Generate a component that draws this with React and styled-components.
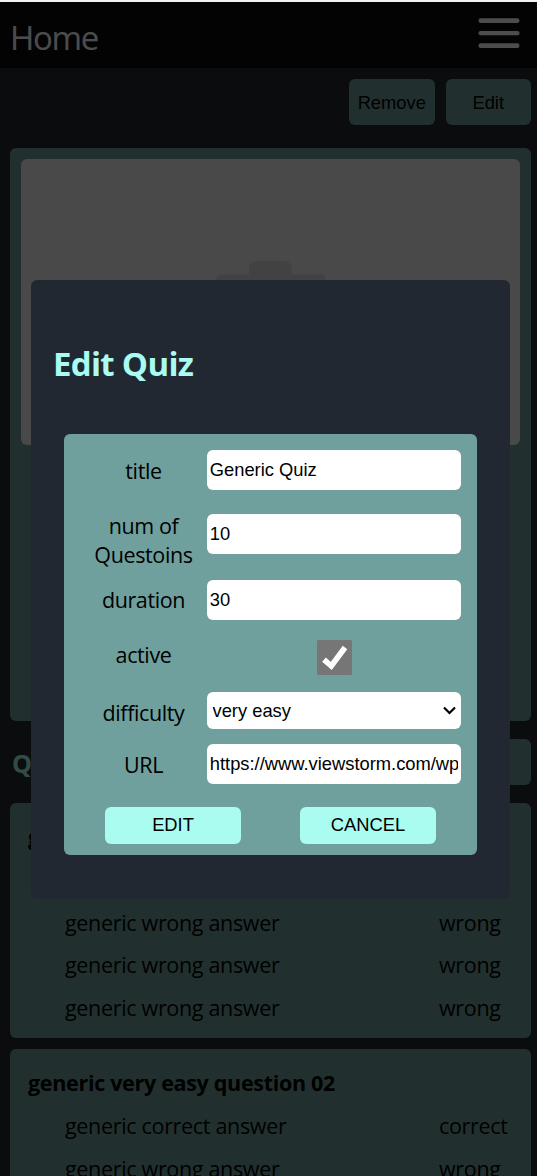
import React from "react";
import styled, { createGlobalStyle } from "styled-components";

const Global = createGlobalStyle`
  * { box-sizing: border-box; }
  html, body { margin: 0; height: 1176px; overflow: hidden; background: #222831; }
  body { font-family: "Open Sans", "Noto Sans", sans-serif; font-size: 21.5px; line-height: 29px; color: #000; }
  button, input, select { font-family: "Liberation Sans", Arial, sans-serif; font-size: 18.33px; color: #000; }
`;

const Page = styled.div`
  position: relative;
  height: 1176px;
  overflow: hidden;
  border-top: 2px solid #f0f4f9;
  background: #222831;
`;

const Header = styled.header`
  display: flex;
  justify-content: space-between;
  height: 66px;
  padding: 16px 17px 0 10px;
  background: #0a0d10;
  color: #fff;
`;

const Brand = styled.div`
  padding-top: 5px;
  font-size: 33px;
  line-height: 30px;
  letter-spacing: -1.3px;
`;

const Actions = styled.div`
  display: flex;
  justify-content: flex-end;
  gap: 11px;
  padding: 11px 6px 0;
`;

const PageButton = styled.button`
  width: 85.5px;
  height: 46px;
  padding: 1px 0 0;
  border: 0;
  border-radius: 6px;
  background: #6fa09d;
`;

const Card = styled.section`
  margin: ${(p) => p.$top}px 6px 0 10px;
  height: ${(p) => p.$height}px;
  border-radius: 6px;
  background: #6fa09d;
`;

const QuizCard = styled(Card)`
  padding: 11px 11px 0;
`;

const Cover = styled.div`
  height: 286px;
  border-radius: 6px;
  background: #f3f3f3;
  overflow: hidden;
  svg { display: block; width: 100%; height: 100%; }
`;

const SectionHead = styled.div`
  display: flex;
  justify-content: space-between;
  align-items: center;
  margin: 18px 6px 0 12px;
  height: 46px;
`;

const SectionTitle = styled.h2`
  margin: 3px 0 0;
  font-size: 25px;
  color: #aafbf0;
`;

const QuestionCard = styled(Card)`
  padding: 19px 18px 0;
`;

const QuestionTitle = styled.h3`
  margin: 0 0 14px;
  font-size: 21.5px;
  line-height: 29px;
  letter-spacing: -0.31px;
`;

const Answer = styled.div`
  display: grid;
  grid-template-columns: 374px 1fr;
  height: 29px;
  margin: 0 -18px 13.6px 37px;
  white-space: nowrap;
  letter-spacing: -0.32px;
`;

const Overlay = styled.div`
  position: absolute;
  inset: 0;
  display: flex;
  align-items: flex-start;
  justify-content: center;
  padding: 278px 27px 0 31px;
  background: rgba(0, 0, 0, 0.7);
`;

const Modal = styled.div`
  width: 479px;
  height: 618.5px;
  padding: 62px 33px 0;
  border-radius: 6px;
  background: #222831;
`;

const ModalTitle = styled.h1`
  margin: 0 0 48px -11px;
  font-size: 33px;
  line-height: 44px;
  letter-spacing: -0.7px;
  color: #aafbf0;
`;

const Form = styled.form`
  width: 412.5px;
  height: 421px;
  padding: 16px 15.5px 0 16px;
  border-radius: 6px;
  background: #6fa09d;
`;

const Row = styled.label`
  display: grid;
  grid-template-columns: 127px 254px;
  height: ${(p) => p.$height}px;
`;

const Label = styled.span`
  margin-top: ${(p) => p.$top}px;
  text-align: center;
  letter-spacing: -0.38px;
`;

const Field = styled.input`
  width: 254px;
  height: 40px;
  padding: 0 2.75px;
  border: 0;
  border-radius: 6px;
  background: #fff;
  outline: none;
`;

const SelectWrap = styled.div`
  position: relative;
  height: 37px;
  svg { position: absolute; right: 5px; top: 14px; }
`;

const Select = styled.select`
  appearance: none;
  width: 254px;
  height: 37px;
  padding: 0 5.5px;
  border: 0;
  border-radius: 6px;
  background: #fff;
`;

const Check = styled.svg`
  display: block;
  width: 35px;
  height: 35px;
  margin: 0.5px auto 0 110px;
`;

const Buttons = styled.div`
  display: flex;
  gap: 59px;
  padding-left: 25px;
`;

const FormButton = styled.button`
  width: 136px;
  height: 37px;
  padding: 0 0 2px;
  border: 0;
  border-radius: 6px;
  background: #aafbf0;
`;

const WRONG = ["generic wrong answer", "wrong"];
const RIGHT = ["generic correct answer", "correct"];

function Question({ title, top, height }) {
  return (
    <QuestionCard $top={top} $height={height}>
      <QuestionTitle>{title}</QuestionTitle>
      {[RIGHT, WRONG, WRONG, WRONG].map(([text, mark], i) => (
        <Answer key={i}>
          <span>{text}</span>
          <span>{mark}</span>
        </Answer>
      ))}
    </QuestionCard>
  );
}

export default function App() {
  return (
    <>
      <Global />
      <Page>
        <Header>
          <Brand>Home</Brand>
          <svg width="42" height="31" viewBox="0 0 42 31" fill="#fff">
            <rect x="0.500" y="0.300" width="41" height="4.700" rx="2.200" />
            <rect x="0.500" y="13" width="41" height="4.200" rx="2" />
            <rect x="0.500" y="25.300" width="41" height="4.700" rx="2.200" />
          </svg>
        </Header>
        <Actions>
          <PageButton>Remove</PageButton>
          <PageButton>Edit</PageButton>
        </Actions>
        <QuizCard $top={22.5} $height={573.5}>
          <Cover>
            <svg viewBox="0 0 499 286">
              <path
                fill="#dedede"
                d="M195 170V120Q195 115.500 199 115.500H228V109Q228 102 235 102H263Q270 102 270.500 109L271 115.500H300Q304 115.500 304 120V170Z"
              />
            </svg>
          </Cover>
        </QuizCard>
        <SectionHead>
          <SectionTitle>Questions</SectionTitle>
          <PageButton>Add</PageButton>
        </SectionHead>
        <Question title="generic very easy question 01" top={18} height={235} />
        <Question title="generic very easy question 02" top={11} height={235} />

        <Overlay>
          <Modal>
            <ModalTitle>Edit Quiz</ModalTitle>
            <Form>
              <Row $height={64}>
                <Label $top={6}>title</Label>
                <Field defaultValue="Generic Quiz" />
              </Row>
              <Row $height={65.5}>
                <Label $top={-3}>num of Questoins</Label>
                <Field defaultValue="10" />
              </Row>
              <Row $height={60}>
                <Label $top={5}>duration</Label>
                <Field defaultValue="30" />
              </Row>
              <Row $height={52.5}>
                <Label $top={0}>active</Label>
                <Check viewBox="0 0 35 35">
                  <rect width="35" height="35" rx="1.500" fill="#767676" />
                  <path d="M7 19.700 14.300 26 28 7.500" fill="none" stroke="#fff" strokeWidth="5.600" />
                </Check>
              </Row>
              <Row $height={52}>
                <Label $top={6}>difficulty</Label>
                <SelectWrap>
                  <Select defaultValue="very easy">
                    <option>very easy</option>
                  </Select>
                  <svg width="13" height="9" viewBox="0 0 13 9" fill="none" stroke="#000" strokeWidth="2.200">
                    <path d="M1 1.500 6.500 7 12 1.500" />
                  </svg>
                </SelectWrap>
              </Row>
              <Row $height={63}>
                <Label $top={6}>URL</Label>
                <Field defaultValue="https://www.viewstorm.com/wp-content" />
              </Row>
              <Buttons>
                <FormButton type="button">EDIT</FormButton>
                <FormButton type="button">CANCEL</FormButton>
              </Buttons>
            </Form>
          </Modal>
        </Overlay>
      </Page>
    </>
  );
}
